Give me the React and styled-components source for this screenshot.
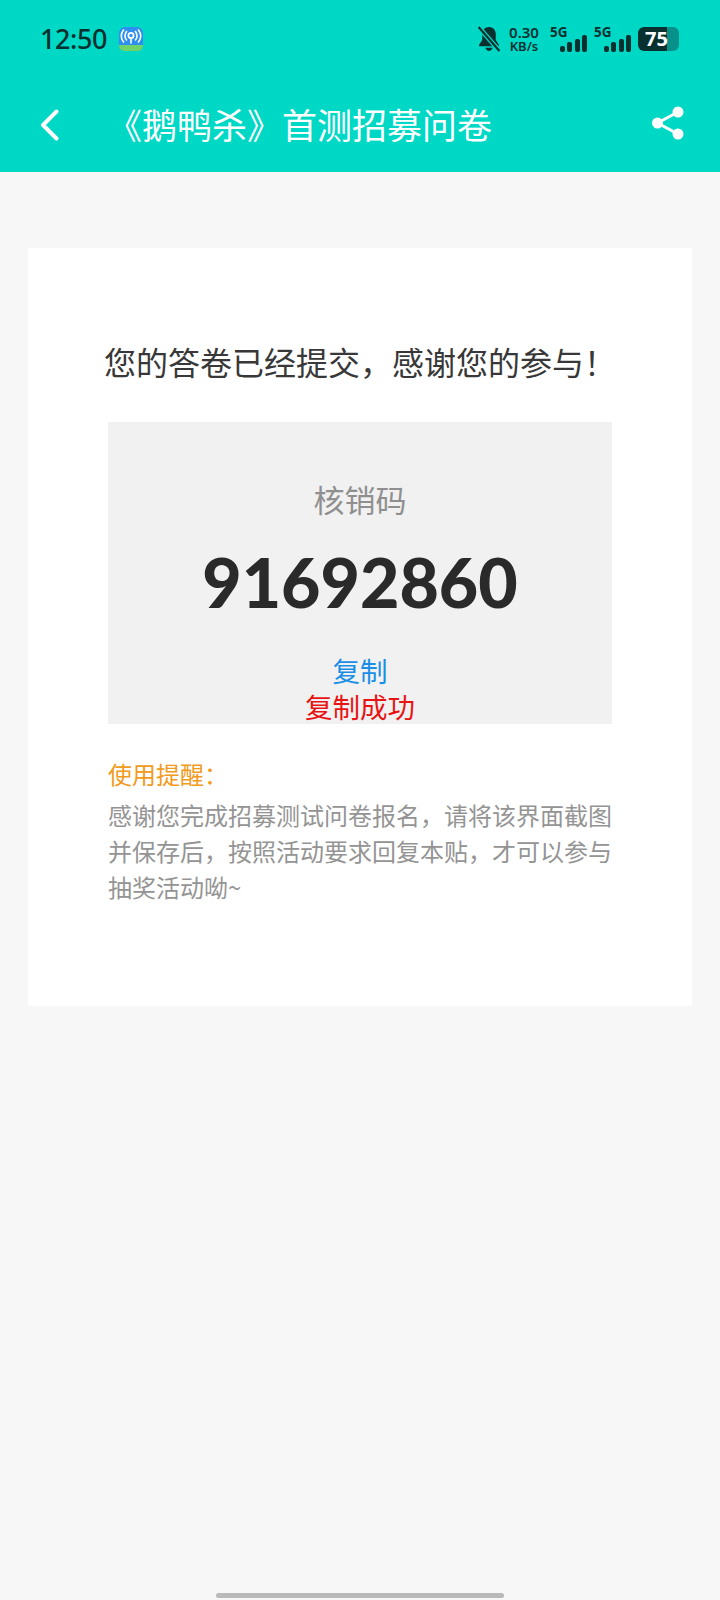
import React from 'react'
import styled, { createGlobalStyle } from 'styled-components'

const GlobalStyle = createGlobalStyle`
  html, body {
    margin: 0;
    padding: 0;
    background: #f7f7f7;
  }
  * {
    box-sizing: border-box;
  }
`

const CJK = `"Noto Sans CJK SC", "Noto Sans", sans-serif`

const Page = styled.div`
  width: 720px;
  height: 1600px;
  display: flex;
  flex-direction: column;
  overflow: hidden;
  background: #f7f7f7;
  font-family: ${CJK};
`

const Header = styled.header`
  height: 172px;
  flex: none;
  background: #00d8c6;
  display: flex;
  flex-direction: column;
`

const StatusBar = styled.div`
  height: 78px;
  padding: 0 41px 0 40px;
  display: flex;
  align-items: center;
  color: #07302f;
`

const Clock = styled.span`
  margin-bottom: 2px;
  font-family: "Noto Sans", sans-serif;
  font-size: 27px;
  font-weight: 500;
  line-height: 1;
  letter-spacing: -0.4px;
`

const AppIcon = styled.svg`
  width: 24px;
  height: 24px;
  margin-left: 12px;
`

const StatusRight = styled.div`
  margin-left: auto;
  display: flex;
  align-items: center;
`

const Speed = styled.div`
  width: 30px;
  margin: 0 11px 0 9px;
  display: flex;
  flex-direction: column;
  align-items: center;
  font-family: "Noto Sans", sans-serif;
  font-weight: 600;
  line-height: 14px;
  white-space: nowrap;
`

const SpeedValue = styled.span`
  font-size: 15px;
`

const SpeedUnit = styled.span`
  font-size: 13px;
`

const Net = styled.div`
  width: 37px;
  height: 25px;
  margin-right: 7px;
  display: flex;
  align-items: flex-end;
  justify-content: flex-end;
  gap: 2.3px;
  position: relative;
`

const NetLabel = styled.span`
  position: absolute;
  left: 0;
  top: -1px;
  font-family: "Noto Sans", sans-serif;
  font-size: 13.5px;
  font-weight: 700;
  line-height: 12px;
`

const Bar = styled.i`
  display: block;
  width: 5px;
  height: ${p => p.$h}px;
  border-radius: 2px;
  background: #07302f;
`

const Battery = styled.div`
  width: 41px;
  height: 24px;
  padding-left: 7px;
  border-radius: 6px;
  background: linear-gradient(to right, #07302f 29px, #07918a 29px);
  color: #fff;
  font-family: "Noto Sans", sans-serif;
  font-size: 20px;
  font-weight: 700;
  line-height: 24px;
`

const NavBar = styled.nav`
  flex: 1;
  padding: 0 32px 4px 40px;
  display: flex;
  align-items: center;
`

const NavTitle = styled.h1`
  margin: 0 0 0 47px;
  flex: 1;
  font-size: 35px;
  font-weight: 400;
  line-height: 1;
  color: #fff;
  white-space: nowrap;
`

const NavIcon = styled.svg`
  flex: none;
  display: block;
`

const BackIcon = styled(NavIcon)`
  margin-top: 3px;
`

const Card = styled.main`
  margin: 76px 28px 0;
  height: 758px;
  padding: 90px 80px 0;
  background: #fff;
`

const Notice = styled.h2`
  margin: 0 -4px;
  font-size: 32px;
  font-weight: 400;
  line-height: 46px;
  color: #383838;
  white-space: nowrap;
`

const CodeBox = styled.section`
  height: 302px;
  margin-top: 38px;
  padding-top: 54px;
  background: #f1f1f1;
  display: flex;
  flex-direction: column;
  align-items: center;
`

const CodeLabel = styled.div`
  font-size: 31px;
  line-height: 46px;
  color: #8f8f8f;
`

const CodeValue = styled.div`
  margin: 18px 0 28px;
  font-family: Lato, "Noto Sans", sans-serif;
  font-size: 68px;
  font-weight: 900;
  line-height: 84px;
  color: #2a2a2a;
`

const CopyLine = styled.div`
  font-size: 27.5px;
  line-height: 36px;
  color: ${p => p.$color};
`

const Hint = styled.section`
  margin-top: 32px;
`

const HintTitle = styled.div`
  margin-bottom: 5px;
  font-size: 24px;
  line-height: 36px;
  color: #f29a1c;
`

const HintBody = styled.p`
  margin: 0;
  font-size: 24px;
  line-height: 36px;
  color: #949494;
`

const HomeBar = styled.div`
  width: 288px;
  height: 5px;
  margin: auto auto 2px;
  border-radius: 3px;
  background: #b9b9b9;
`

const signalBars = [6, 10, 13, 17]

function Signal() {
    return (
        <Net>
            <NetLabel>5G</NetLabel>
            {signalBars.map(h => <Bar key={h} $h={h} />)}
        </Net>
    )
}

function App() {
    return (
        <Page>
            <GlobalStyle />
            <Header>
                <StatusBar>
                    <Clock>12:50</Clock>
                    <AppIcon viewBox="0 0 24 24">
                        <rect width="24" height="24" rx="6" fill="#2f8ff0" />
                        <path d="M0 18h24v.5a5.500 5.500 0 0 1-5.500 5.500h-13A5.500 5.500 0 0 1 0 18.500z" fill="#6fd36a" />
                        <circle cx="12" cy="8.500" r="2.600" fill="none" stroke="#fff" strokeWidth="1.800" />
                        <path d="M12 11v5M7.500 4.500c-2 3-2 6 0 8.500M16.500 4.500c2 3 2 6 0 8.500M4.500 3c-3 4-3 8 0 12M19.500 3c3 4 3 8 0 12" fill="none" stroke="#fff" strokeWidth="1.600" strokeLinecap="round" />
                    </AppIcon>
                    <StatusRight>
                        <svg width="22" height="26" viewBox="2 1 20 25">
                            <path d="M12 2c-4 0-6.500 3-6.500 6.500v6L2.500 19v1.500h19V19l-3-4.500v-6C18.500 5 16 2 12 2zM8.500 22h7c-.5 2-2 3-3.500 3s-3-1-3.500-3z" fill="#07302f" />
                            <path d="M2 2l20 23" stroke="#00d8c6" strokeWidth="4.500" />
                            <path d="M2 2l20 23" stroke="#07302f" strokeWidth="2" />
                        </svg>
                        <Speed>
                            <SpeedValue>0.30</SpeedValue>
                            <SpeedUnit>KB/s</SpeedUnit>
                        </Speed>
                        <Signal />
                        <Signal />
                        <Battery>75</Battery>
                    </StatusRight>
                </StatusBar>
                <NavBar>
                    <BackIcon width="20" height="32" viewBox="0 0 20 32">
                        <path d="M16.500 2.500 3 16l13.500 13.500" fill="none" stroke="#fff" strokeWidth="4" strokeLinecap="round" strokeLinejoin="round" />
                    </BackIcon>
                    <NavTitle>《鹅鸭杀》首测招募问卷</NavTitle>
                    <NavIcon width="36" height="36" viewBox="0 0 36 36">
                        <path d="M26 7 5.500 18 26 29" fill="none" stroke="#fff" strokeWidth="3" />
                        <circle cx="26" cy="7" r="5.500" fill="#fff" />
                        <circle cx="5.500" cy="18" r="5.500" fill="#fff" />
                        <circle cx="26" cy="29" r="5.500" fill="#fff" />
                    </NavIcon>
                </NavBar>
            </Header>

            <Card>
                <Notice>您的答卷已经提交&#xFF0C;感谢您的参与&#xFF01;</Notice>
                <CodeBox>
                    <CodeLabel>核销码</CodeLabel>
                    <CodeValue>91692860</CodeValue>
                    <CopyLine $color="#1b8fe6">复制</CopyLine>
                    <CopyLine $color="#e81414">复制成功</CopyLine>
                </CodeBox>
                <Hint>
                    <HintTitle>使用提醒&#xFF1A;</HintTitle>
                    <HintBody>
                        感谢您完成招募测试问卷报名&#xFF0C;请将该界面截图并保存后&#xFF0C;按照活动要求回复本贴&#xFF0C;才可以参与抽奖活动呦~
                    </HintBody>
                </Hint>
            </Card>

            <HomeBar />
        </Page>
    )
}

export default App
